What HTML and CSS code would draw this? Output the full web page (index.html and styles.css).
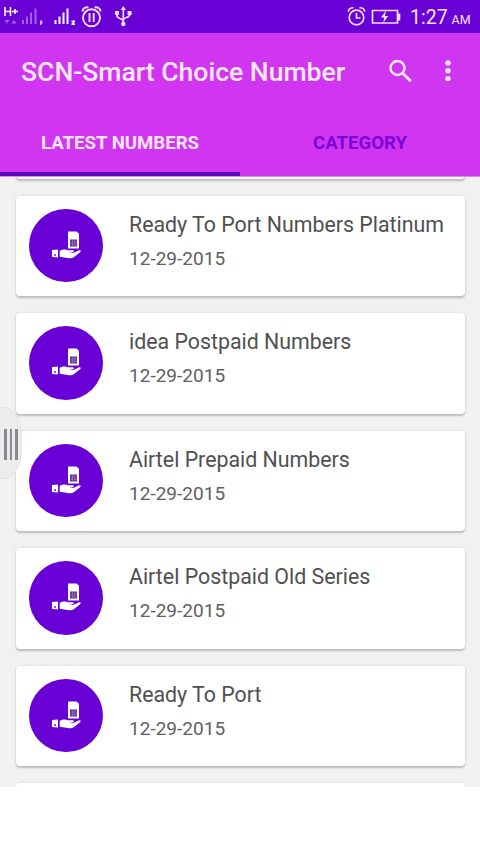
FILE: index.html
```html
<!DOCTYPE html>
<html lang="en">
<head>
<meta charset="utf-8">
<title>SCN-Smart Choice Number</title>
<link rel="stylesheet" href="styles.css">
</head>
<body>
<svg class="defs" width="0" height="0" aria-hidden="true">
  <symbol id="sim-hand" viewBox="0 0 32 30">
    <path fill="#fff" d="M17 1.500h8.500l2.500 2.200V18.500h-11z"/>
    <path fill="#5b2f8c" d="M19 9.500h7v7h-7z"/>
    <path stroke="#a985cb" stroke-width=".6" d="M19 12h7M19 14.300h7M21.500 9.500v7M23.800 9.500v7"/>
    <path fill="#fff" d="M8.700 20.800c3.500-1.800 6-1.800 8.300-.5h4.500c1.800 0 2 1.700.5 2l-4 .6 4.500.1 5-2.400c1.800-.8 3 .5 1.600 1.700l-6 4.800c-1.500 1-3 1.400-5 1.100l-9.400-1.400z"/>
    <path fill="#fff" d="M1 20l6-.5v8l-6-.5z"/>
    <circle cx="4" cy="25" r=".9" fill="#6900d6"/>
  </symbol>
</svg>
<div class="screen">
  <header class="status">
    <svg class="status-left" viewBox="0 0 140 33" width="140" height="33">
      <g fill="none" stroke="#fff" stroke-width="1.500">
        <path d="M5 7v9M10.500 7v9M5 11.500h5.500M12 11.500h6M15 9v5"/>
      </g>
      <path fill="#a661ee" d="M4.500 20h5l-2.500 3.500zM11.500 23.500h5L14 20zM22 20h2v4h-2zM26 16.500h2V24h-2zM30 12.500h2V24h-2zM34.500 8.500h2V24h-2z"/>
      <path fill="#d7b4fa" d="M40 20.500h2.300v3l-1.500 1.500H40z"/>
      <path fill="#fff" d="M54.500 20h2v4h-2zM58.500 16.500h2V24h-2zM62.500 12.500h2V24h-2zM66.500 8.500h2V24h-2zM71.500 20.500H75v1.800l-1.500 1.200H75V25h-3.500v-1.500l1.500-1.500h-1.500z"/>
      <g fill="none" stroke="#f3defc" stroke-width="1.900">
        <circle cx="91.500" cy="17.800" r="8.500"/>
        <path d="M82.500 11.500c0-3 3-5 6-4M100.500 11.500c0-3-3-5-6-4M89.500 13v9M93.700 13v9"/>
      </g>
      <g fill="none" stroke="#f3defc" stroke-width="1.700">
        <path d="M123.300 9v15M117 13v3c0 3 6.300 2 6.300 5.500M129.600 13v2c0 3-6.300 2-6.300 5"/>
      </g>
      <path fill="#f3defc" d="M123.300 6l2.700 4h-5.400zM115 11h4v4h-4zM127.600 11h4v4h-4z"/>
      <circle cx="123.300" cy="24" r="2.200" fill="#f3defc"/>
    </svg>
    <div class="status-right">
      <svg viewBox="0 0 56 33" width="56" height="33">
        <g fill="none" stroke="#f3defc" stroke-width="1.700">
          <circle cx="9.500" cy="17.500" r="7.300"/>
          <path d="M1.300 11.700c.2-2.500 2.500-4.300 5.200-3.900M17.700 11.700c-.2-2.500-2.500-4.300-5.200-3.900M9.500 13v5h4"/>
          <path d="M25.500 10.500h25v12.500h-25z"/>
        </g>
        <path fill="#f3defc" d="M51 13.500h2.300v7H51zM39 10.500l-5 7h3.200l-1 5.500 5-7H38z"/>
      </svg>
      <span class="time">1:27</span><span class="ampm">AM</span>
    </div>
  </header>
  <div class="toolbar">
    <h1>SCN-Smart Choice Number</h1>
    <svg class="search" viewBox="0 0 24 24" width="24" height="24">
      <circle cx="8.500" cy="9" r="7" fill="none" stroke="#ffe8ff" stroke-width="2.400"/>
      <path d="M13.500 14l8.300 8.300" stroke="#ffe8ff" stroke-width="3"/>
    </svg>
    <svg class="more" viewBox="0 0 6 24" width="6" height="24">
      <g fill="#ffe8ff"><circle cx="3" cy="4" r="2.700"/><circle cx="3" cy="11.800" r="2.700"/><circle cx="3" cy="19.600" r="2.700"/></g>
    </svg>
  </div>
  <nav class="tabs">
    <div class="tab active">LATEST NUMBERS</div>
    <div class="tab">CATEGORY</div>
  </nav>
  <main class="list">
    <div class="card peek"></div>
    <article class="card"><div class="avatar"><svg width="32" height="30"><use href="#sim-hand"/></svg></div><div class="info"><h2>Ready To Port Numbers Platinum</h2><p>12-29-2015</p></div></article>
    <article class="card"><div class="avatar"><svg width="32" height="30"><use href="#sim-hand"/></svg></div><div class="info"><h2>idea Postpaid Numbers</h2><p>12-29-2015</p></div></article>
    <article class="card"><div class="avatar"><svg width="32" height="30"><use href="#sim-hand"/></svg></div><div class="info"><h2>Airtel Prepaid Numbers</h2><p>12-29-2015</p></div></article>
    <article class="card"><div class="avatar"><svg width="32" height="30"><use href="#sim-hand"/></svg></div><div class="info"><h2>Airtel Postpaid Old Series</h2><p>12-29-2015</p></div></article>
    <article class="card"><div class="avatar"><svg width="32" height="30"><use href="#sim-hand"/></svg></div><div class="info"><h2>Ready To Port</h2><p>12-29-2015</p></div></article>
    <div class="card"></div>
  </main>
  <div class="handle"><i></i><i></i><i></i></div>
</div>
</body>
</html>
```
FILE: styles.css
```css
* { box-sizing: border-box; }
body { margin: 0; background: #fff; font-family: Roboto, "Liberation Sans", sans-serif; }
h1, h2, p { margin: 0; font-weight: 400; white-space: nowrap; }
svg { display: block; flex: none; }
.defs { position: absolute; }
.screen { position: relative; width: 480px; height: 854px; overflow: hidden; }
.status { height: 33px; display: flex; justify-content: space-between; background: #6900d6; color: #f7e6ff; }
.status-right { display: flex; align-items: baseline; width: 133px; }
.status-right svg { align-self: flex-start; }
.time { margin-left: 7px; font-size: 19.500px; line-height: 36px; }
.ampm { margin-left: 4px; font-size: 12.500px; }
.toolbar { height: 75px; display: flex; align-items: flex-start; padding: 0 29px 0 21px; background: #d036f0; border-bottom: 1px solid #c931ea; }
.toolbar h1 { width: 368px; font-size: 26.550px; font-weight: 500; line-height: 78px; color: #ffe8ff; }
.search { margin-top: 26px; }
.more { margin: 26px 0 0 auto; }
.tabs { height: 69px; display: flex; background: #d036f0; border-bottom: 1px solid #d98ce8; }
.tab { flex: 1; height: 68px; text-align: center; line-height: 70px; font-size: 18.600px; font-weight: 700; color: #7b05d8; }
.tab.active { color: #ffe4ff; border-bottom: 4px solid #5c05bd; }
.list { height: 610px; overflow: hidden; display: flex; flex-direction: column; gap: 17px; padding: 0 15px 0 16px; background: #f1f1f1; }
.card { flex: none; height: 100.500px; display: flex; padding: 13px 0 0 13px; border-radius: 4px; background: #fff; box-shadow: 0 2px 2px #bdbdbd, 0 0 2px #d2d2d2; }
.peek { margin-top: -98.700px; }
.avatar { flex: none; width: 73.500px; height: 73.500px; border-radius: 50%; background: #6900d6; padding: 21px 0 0 22px; }
.info { margin-left: 26.500px; color: #505050; }
.info h2 { font-size: 21.350px; line-height: 31px; }
.info p { font-size: 19.050px; line-height: 37px; color: #606060; }
.handle { position: absolute; left: 0; top: 407px; width: 22px; height: 72px; display: flex; gap: 3px; padding: 21px 0 0 4px; border: 1px solid #e2e2e2; border-left: 0; border-radius: 0 18px 18px 0 / 0 30px 30px 0; background: #ececec; }
.handle i { width: 2.500px; height: 31px; background: #858a90; }
```
